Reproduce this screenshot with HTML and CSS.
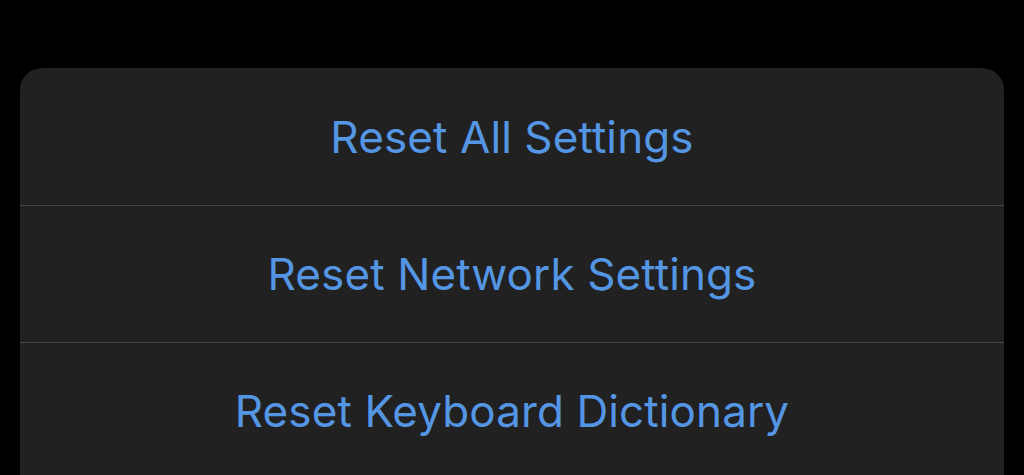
FILE: index.html
```html
<!DOCTYPE html>
<html lang="en">
<head>
    <meta charset="UTF-8">
    <meta name="viewport" content="width=device-width, initial-scale=1.0">
    <title>Reset</title>
    <link rel="stylesheet" href="styles.css">
</head>
<body>
    <div class="sheet">
        <div class="sheet-row">Reset All Settings</div>
        <div class="sheet-row">Reset Network Settings</div>
        <div class="sheet-row">Reset Keyboard Dictionary</div>
    </div>
</body>
</html>
```

FILE: styles.css
```css
body {
    margin: 0;
    background-color: #000;
    font-family: Inter, "Noto Sans", sans-serif;
    height: 475px;
    overflow: hidden;
}

.sheet {
    margin: 68px 20px 0 20px;
    background-color: #212121;
    border-radius: 22px 22px 0 0;
}

.sheet-row {
    height: 136px;
    display: flex;
    align-items: center;
    justify-content: center;
    color: #5596e4;
    font-size: 44px;
    letter-spacing: 0.1px;
    border-bottom: 1px solid #464646;
}

.sheet-row:first-child {
    height: 137px;
}
```
